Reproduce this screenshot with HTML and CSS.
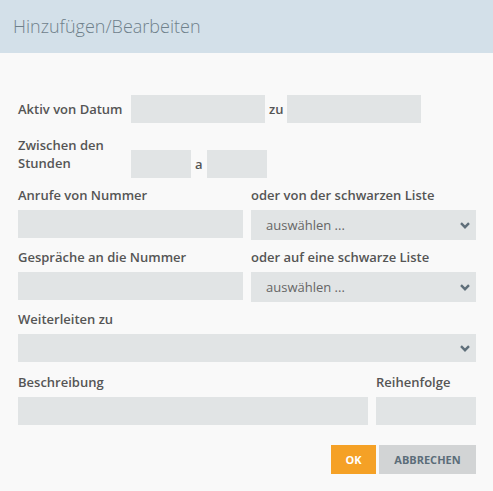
FILE: index.html
```html
<!DOCTYPE html>
<html lang="de">
<head>
    <meta charset="UTF-8">
    <meta name="viewport" content="width=device-width, initial-scale=1.0">
    <title>Hinzufügen/Bearbeiten</title>
    <link rel="stylesheet" href="styles.css">
</head>
<body>
    <div class="modal">
        <header class="modal-header">
            <h2>Hinzufügen/Bearbeiten</h2>
        </header>

        <form class="modal-body">
            <div class="inline-row">
                <label class="inline-label">Aktiv von Datum</label>
                <div class="range">
                    <input type="text" class="field date-field">
                    <span class="sep">zu</span>
                    <input type="text" class="field date-field">
                </div>
            </div>

            <div class="inline-row hours-row">
                <label class="inline-label">Zwischen den<br>Stunden</label>
                <div class="range">
                    <input type="text" class="field hour-field">
                    <span class="sep">a</span>
                    <input type="text" class="field hour-field">
                </div>
            </div>

            <div class="two-cols">
                <div class="group">
                    <label>Anrufe von Nummer</label>
                    <input type="text" class="field">
                </div>
                <div class="group">
                    <label>oder von der schwarzen Liste</label>
                    <div class="select-wrap">
                        <select class="field select">
                            <option>auswählen ...</option>
                        </select>
                        <svg class="chevron" width="10" height="7" viewBox="0 0 10 7"><path d="M1 1.2 L5 5.2 L9 1.2" fill="none" stroke="#5f6f7a" stroke-width="2.4"/></svg>
                    </div>
                </div>
            </div>

            <div class="two-cols">
                <div class="group">
                    <label>Gespräche an die Nummer</label>
                    <input type="text" class="field">
                </div>
                <div class="group">
                    <label>oder auf eine schwarze Liste</label>
                    <div class="select-wrap">
                        <select class="field select">
                            <option>auswählen ...</option>
                        </select>
                        <svg class="chevron" width="10" height="7" viewBox="0 0 10 7"><path d="M1 1.2 L5 5.2 L9 1.2" fill="none" stroke="#5f6f7a" stroke-width="2.4"/></svg>
                    </div>
                </div>
            </div>

            <div class="group forward-group">
                <label>Weiterleiten zu</label>
                <div class="select-wrap">
                    <select class="field select short">
                        <option></option>
                    </select>
                    <svg class="chevron" width="10" height="7" viewBox="0 0 10 7"><path d="M1 1.2 L5 5.2 L9 1.2" fill="none" stroke="#5f6f7a" stroke-width="2.4"/></svg>
                </div>
            </div>

            <div class="desc-cols">
                <div class="group">
                    <label>Beschreibung</label>
                    <input type="text" class="field">
                </div>
                <div class="group">
                    <label>Reihenfolge</label>
                    <input type="text" class="field">
                </div>
            </div>

            <div class="actions">
                <button type="button" class="btn btn-ok">OK</button>
                <button type="button" class="btn btn-cancel">Abbrechen</button>
            </div>
        </form>
    </div>
</body>
</html>
```

FILE: styles.css
```css
body {
    margin: 0;
    padding: 0;
    font-family: 'Open Sans', 'Liberation Sans', sans-serif;
    background-color: #f9f9f9;
    color: #555;
}
.modal {
    width: 493px;
    min-height: 491px;
    background-color: #f9f9f9;
}
.modal-header {
    height: 53px;
    background-color: #d3e0e9;
    display: flex;
    align-items: center;
    padding-left: 13px;
}
.modal-header h2 {
    margin: 0;
    font-size: 18px;
    font-weight: 300;
    color: #6f808b;
    padding-bottom: 1px;
}
.modal-body {
    padding: 42px 17px 0 18px;
}
label {
    display: block;
    font-size: 13px;
    font-weight: 600;
    line-height: 18px;
    color: #555;
}
.inline-row {
    display: flex;
    align-items: center;
}
.inline-label {
    width: 113px;
    flex-shrink: 0;
}
.hours-row {
    align-items: flex-end;
    margin-top: 13px;
}
.hours-row .inline-label {
    padding-bottom: 6px;
}
.range {
    display: flex;
    align-items: center;
}
.sep {
    font-size: 13px;
    font-weight: 600;
    color: #555;
    margin: 0 4px;
}
.field {
    display: block;
    box-sizing: border-box;
    width: 100%;
    height: 28px;
    border: none;
    border-radius: 0;
    background-color: #e1e4e5;
    font-family: inherit;
    font-size: 13px;
    color: #666;
    outline: none;
}
.date-field {
    width: 134px;
}
.hour-field {
    width: 60px;
}
.two-cols {
    display: grid;
    grid-template-columns: 1fr 1fr;
    gap: 8px;
    margin-top: 8px;
}
.group label {
    margin-bottom: 6px;
}
.select-wrap {
    position: relative;
}
.select {
    -webkit-appearance: none;
    appearance: none;
    height: 30px;
    padding: 0 24px 0 15px;
}
.select.short {
    height: 28px;
}
.chevron {
    position: absolute;
    right: 6px;
    top: 50%;
    margin-top: -3px;
    pointer-events: none;
}
.forward-group {
    margin-top: 8px;
}
.desc-cols {
    display: grid;
    grid-template-columns: 1fr 100px;
    gap: 8px;
    margin-top: 11px;
}
.actions {
    display: flex;
    justify-content: flex-end;
    gap: 3px;
    margin-top: 20px;
}
.btn {
    height: 29px;
    border: none;
    border-radius: 0;
    padding: 0;
    font-family: inherit;
    font-size: 11px;
    font-weight: 700;
    text-transform: uppercase;
    cursor: pointer;
}
.btn-ok {
    background-color: #f5a126;
    color: #fff;
    width: 45px;
}
.btn-cancel {
    background-color: #d2d4d5;
    color: #5b6d79;
    width: 97px;
}
```
